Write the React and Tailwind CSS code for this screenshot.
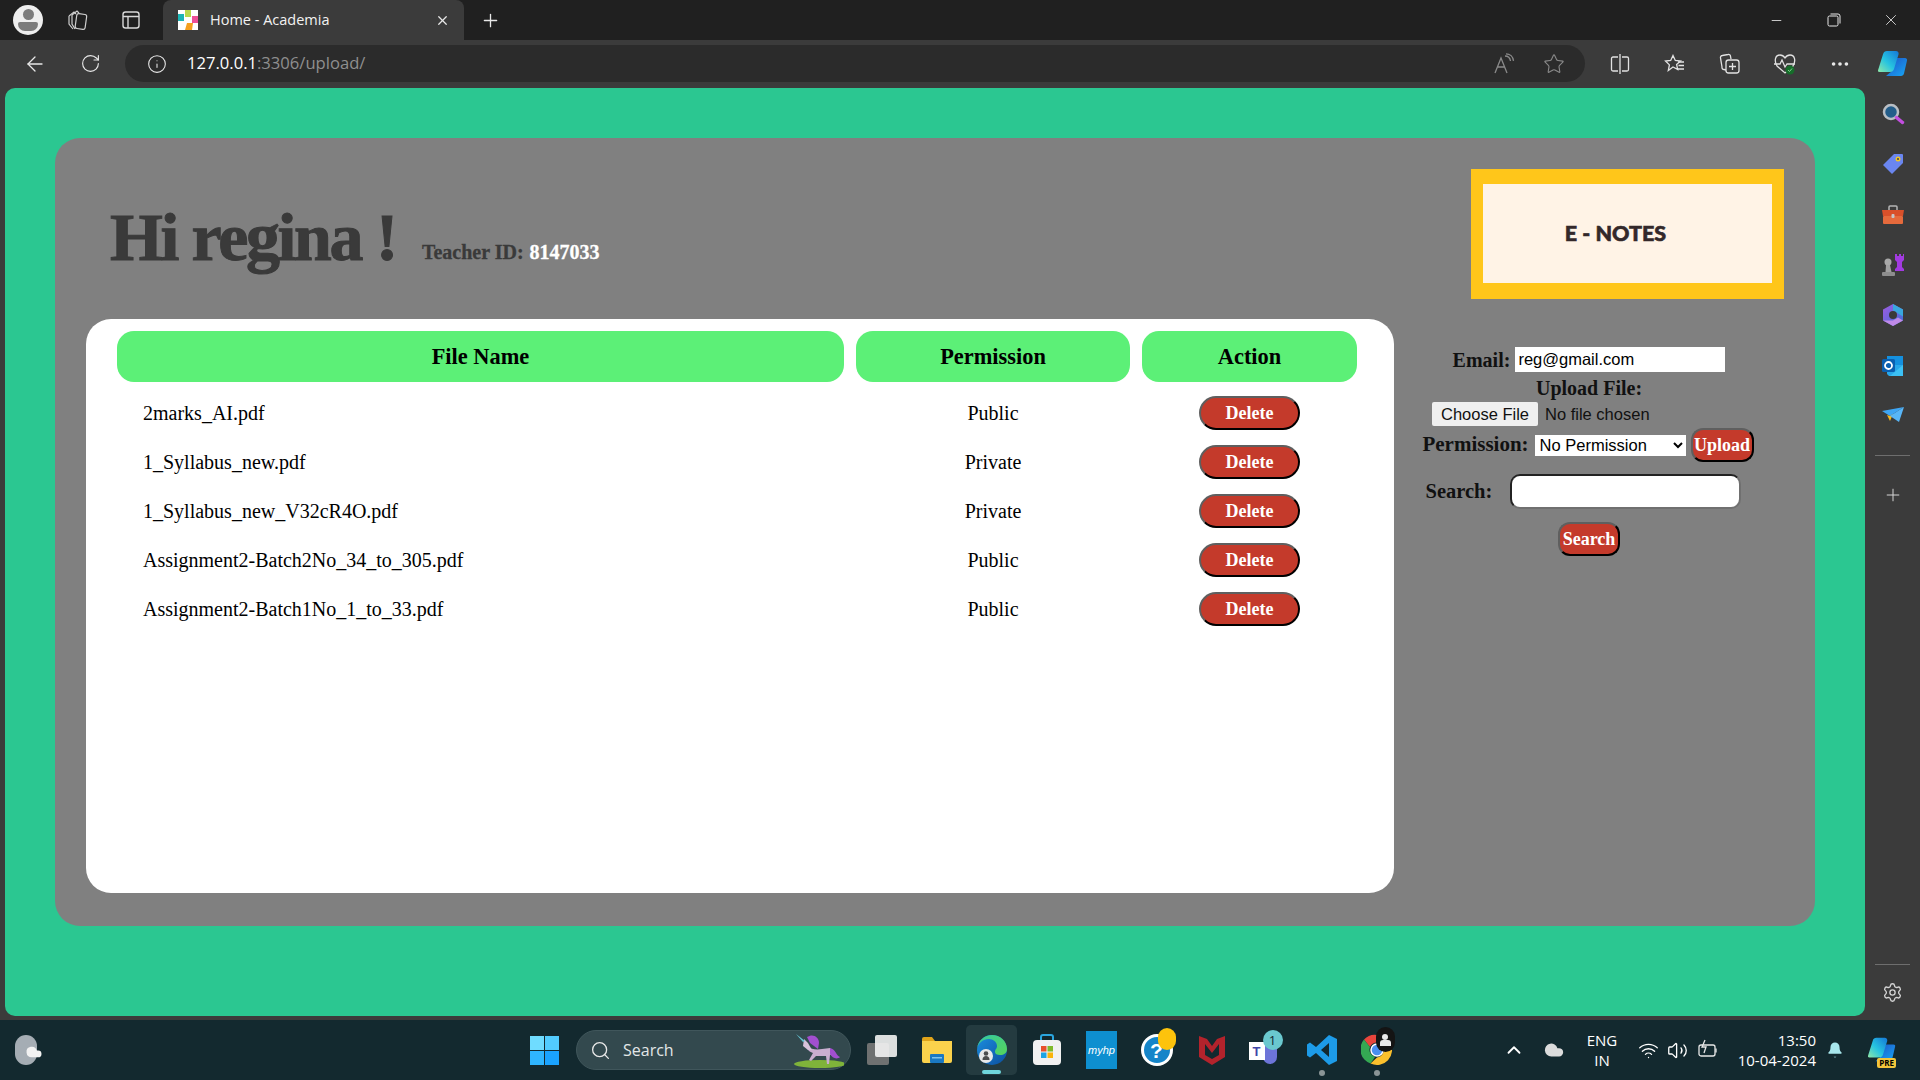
import { ArrowLeft, RotateCw, Info, Star, Plus, X, Minus, Search, MoreHorizontal, Settings, ChevronUp, Wifi, Volume2, Bell, Cloud } from "lucide-react";

const files = [
  { name: "2marks_AI.pdf", permission: "Public" },
  { name: "1_Syllabus_new.pdf", permission: "Private" },
  { name: "1_Syllabus_new_V32cR4O.pdf", permission: "Private" },
  { name: "Assignment2-Batch2No_34_to_305.pdf", permission: "Public" },
  { name: "Assignment2-Batch1No_1_to_33.pdf", permission: "Public" },
];

const serif = "font-['Liberation_Serif',serif]";
const ui = "font-['Open_Sans',sans-serif]";
const redBtn = "bg-[#c43a2b] text-white font-bold text-[18px] border-2 border-t-[#5f5f5f] border-l-[#5f5f5f] border-r-black border-b-black font-['Liberation_Serif',serif] leading-none";

/* ---------- browser icons ---------- */

function Favicon() {
  return (
    <svg width="20" height="20" viewBox="0 0 20 20">
      <rect width="20" height="20" fill="#fff" />
      <rect x="0" y="4" width="6" height="7" fill="#19b5b5" />
      <rect x="7" y="0" width="6" height="7" fill="#b6d94c" />
      <rect x="14" y="6" width="6" height="7" fill="#ec4f97" />
      <path d="M9 13h6l-1 7H7z" fill="#f59f1e" />
    </svg>
  );
}

function Profile() {
  return (
    <div className="w-[30px] h-[30px] rounded-full bg-[#eeeeee] overflow-hidden flex flex-col items-center justify-center">
      <div className="w-[11px] h-[11px] rounded-full bg-[#7b7b7b]" />
      <div className="w-[20px] h-[9px] mt-[2px] rounded-b-[10px] rounded-t-[3px] bg-[#7b7b7b]" />
    </div>
  );
}

function Workspaces() {
  return (
    <svg width="22" height="22" viewBox="0 0 22 22" fill="none" stroke="#cfcfcf" strokeWidth="1.2">
      <path d="M2 7l5-4 2 2M2 7v8l4 5" />
      <path d="M5 6l5-4 2 2M5 6v9l3 5" />
      <rect x="9" y="5" width="10" height="15" rx="2" transform="rotate(8 14 12)" />
    </svg>
  );
}

function VerticalTabs() {
  return (
    <svg width="20" height="20" viewBox="0 0 20 20" fill="none" stroke="#d8d8d8" strokeWidth="1.4">
      <rect x="2" y="2" width="16" height="16" rx="2.5" />
      <path d="M2 6.5h16M7 6.5V18" />
    </svg>
  );
}

function RestoreIcon() {
  return (
    <svg width="14" height="14" viewBox="0 0 14 14" fill="none" stroke="#e8e8e8" strokeWidth="1">
      <rect x="1" y="3" width="10" height="10" rx="1.5" />
      <path d="M3.5 1h7.5a2 2 0 0 1 2 2v7.5" />
    </svg>
  );
}

function ReadAloud() {
  return (
    <svg width="22" height="22" viewBox="0 0 22 22" fill="none" stroke="#8a8a8a" strokeWidth="1.3">
      <path d="M2 20L8 5l6 15M4.5 14h7" />
      <path d="M12 3c3 0 5 2 5.5 5M13 .8c4 0 7 3 7.5 7" />
    </svg>
  );
}

function SplitIcon() {
  return (
    <svg width="20" height="20" viewBox="0 0 20 20" fill="none" stroke="#e2e2e2" strokeWidth="1.3">
      <path d="M8 3H3a1.5 1.5 0 0 0-1.5 1.5v11A1.5 1.5 0 0 0 3 17h5M12 3h5a1.5 1.5 0 0 1 1.5 1.5v11A1.5 1.5 0 0 1 17 17h-5M10 0v20" />
    </svg>
  );
}

function FavoritesIcon() {
  return (
    <svg width="22" height="20" viewBox="0 0 22 20" fill="none" stroke="#e2e2e2" strokeWidth="1.3">
      <path d="M9 1.5l2.3 5 5.2.5-3.9 3.4 1.1 5.1L9 13l-4.700 3.500 1.100-5.600L1.500 7l5.200-.5z" />
      <path d="M14 8h6M14.500 11.500h5.500M13 15h7" />
    </svg>
  );
}

function CollectionsIcon() {
  return (
    <svg width="22" height="22" viewBox="0 0 22 22" fill="none" stroke="#e2e2e2" strokeWidth="1.3">
      <path d="M7 17l-2-.5a2 2 0 0 1-2-2.500L1.500 5a2 2 0 0 1 1.800-2.500L9 1.500a2 2 0 0 1 2.500 1.800L12 6" />
      <rect x="7" y="7" width="13" height="13" rx="2.500" />
      <path d="M13.500 10v7M10 13.500h7" />
    </svg>
  );
}

function HealthIcon() {
  return (
    <svg width="24" height="24" viewBox="0 0 24 24" fill="none">
      <path d="M4 14C1 9 2 3 7 3c2.500 0 4 1.500 5 3 1-1.500 2.500-3 5-3 5 0 6 6 3 11l-8 7z" stroke="#e2e2e2" strokeWidth="1.3" />
      <path d="M1 12h6l2-4 3 7 2-3h8" stroke="#e2e2e2" strokeWidth="1.3" fill="none" />
      <circle cx="17" cy="18" r="4.500" fill="#166d2a" />
      <path d="M15 18l1.500 1.500 2.500-3" stroke="#7fd08d" strokeWidth="1" />
    </svg>
  );
}

function Copilot({ size = 30 }) {
  return (
    <svg width={size} height={size} viewBox="0 0 30 30">
      <defs>
        <linearGradient id="cpA" x1="0" y1="1" x2="1" y2="0">
          <stop offset="0" stopColor="#8fe8a8" />
          <stop offset="0.45" stopColor="#27c4e0" />
          <stop offset="1" stopColor="#1477d8" />
        </linearGradient>
        <linearGradient id="cpB" x1="0" y1="0" x2="1" y2="1">
          <stop offset="0" stopColor="#1f4fc4" />
          <stop offset="1" stopColor="#17a8f5" />
        </linearGradient>
      </defs>
      <path d="M19 9h8a2 2 0 0 1 2 2.500l-3 13c-.400 1.500-1.500 2.500-3 2.500H8l3.500-3c1.500-1 2.500-2.500 3-4z" fill="url(#cpB)" />
      <path d="M9 2h9c2 0 3 1.500 2.500 3.500L16 20c-.600 2-2 3-4 3H1.500a1.500 1.500 0 0 1-1.400-2l5-16C5.700 3 7 2 9 2z" fill="url(#cpA)" />
    </svg>
  );
}

/* ---------- sidebar icons ---------- */

function SideSearch() {
  return (
    <svg width="24" height="24" viewBox="0 0 24 24" fill="none">
      <circle cx="10" cy="10" r="7" fill="#235d8a" stroke="#b9bec4" strokeWidth="2.500" />
      <path d="M15.500 15.500l6 5" stroke="#c34ee0" strokeWidth="3.500" strokeLinecap="round" />
    </svg>
  );
}

function SideTag() {
  return (
    <svg width="22" height="22" viewBox="0 0 22 22">
      <path d="M12 1h8a1 1 0 0 1 1 1v8L10 21 1 12z" fill="#6a86f0" />
      <circle cx="16" cy="6" r="2.500" fill="#f2c624" />
      <circle cx="16" cy="6" r="1" fill="#3a3a5a" />
    </svg>
  );
}

function SideToolbox() {
  return (
    <svg width="24" height="22" viewBox="0 0 24 22">
      <path d="M8 6V3a1 1 0 0 1 1-1h6a1 1 0 0 1 1 1v3" fill="none" stroke="#b5b5b5" strokeWidth="1.500" />
      <path d="M1 6h22l-1 6H2z" fill="#d9502a" />
      <rect x="2" y="12" width="20" height="8" rx="1" fill="#e56a3c" />
      <rect x="10.500" y="10" width="3" height="4" rx="1" fill="#c7c7c7" />
    </svg>
  );
}

function SideChess() {
  return (
    <svg width="24" height="24" viewBox="0 0 24 24">
      <path d="M14 1h2v2h2V1h2v2h2V1h1v6l-2 2v5l2 2v2h-9v-2l2-2V9l-2-2z" fill="#a23be0" />
      <circle cx="7" cy="9" r="3.500" fill="#a8a8a8" />
      <path d="M5 12h4l1.500 7h-6z" fill="#a0a0a0" />
      <rect x="1" y="19" width="13" height="4" rx="1" fill="#8d8d8d" />
    </svg>
  );
}

function SideM365() {
  return (
    <svg width="22" height="24" viewBox="0 0 22 24">
      <defs>
        <linearGradient id="msA" x1="0" y1="0" x2="1" y2="1">
          <stop offset="0" stopColor="#a05be0" />
          <stop offset="1" stopColor="#3d6fd8" />
        </linearGradient>
      </defs>
      <path d="M11 1l10 5.500v11L11 23 1 17.500v-11z" fill="url(#msA)" />
      <path d="M11 1l10 5.500v7l-5-3-5-3z" fill="#39a7de" />
      <path d="M1 17.500L11 23l10-5.500-5-3-5 3z" fill="#c08ae8" />
      <circle cx="11" cy="12" r="4" fill="#3a3a3a" />
    </svg>
  );
}

function SideOutlook() {
  return (
    <svg width="22" height="22" viewBox="0 0 22 22">
      <rect x="5" y="1" width="16" height="9" fill="#1490df" />
      <path d="M5 10h16v11H7l-2-2z" fill="#28a8ea" />
      <path d="M21 10v11H8z" fill="#50d9ff" opacity="0.5" />
      <rect x="0" y="4" width="13" height="13" rx="1.500" fill="#0a5fb0" />
      <circle cx="6.500" cy="10.500" r="3.500" fill="none" stroke="#fff" strokeWidth="1.800" />
    </svg>
  );
}

function SideSend() {
  return (
    <svg width="22" height="18" viewBox="0 0 22 18">
      <path d="M0 4L22 0 8 9z" fill="#3ea6f5" />
      <path d="M5 8l3 1 3-2-3 7z" fill="#f4b71e" />
      <path d="M22 0l-5 15-9-6z" fill="#58b6f8" />
    </svg>
  );
}

/* ---------- taskbar icons ---------- */

function Unicorn() {
  return (
    <svg width="54" height="36" viewBox="0 0 54 36">
      <ellipse cx="30" cy="31" rx="26" ry="4" fill="#7fb33a" />
      <path d="M18 14c3 2 8 3 14 2l8-1 2 6-2 1-1 9h-2l-1-8-10 0-5 5-2-1 4-7c-3-1-6-3-6-6z" fill="#c9aed0" />
      <path d="M14 6l4 4 4 7-4 0-5-4z" fill="#d8c2dc" />
      <path d="M6 1l9 7-2 1z" fill="#66c6d6" />
      <path d="M17 4c6-4 12 0 12 6l-1 6-8-6z" fill="#a24fd0" />
      <path d="M40 15c6 1 6 8 10 9-3 3-8 1-10-3z" fill="#a24fd0" />
    </svg>
  );
}

function TaskView() {
  return (
    <div className="w-[30px] h-[30px] flex flex-col">
      <div className="relative w-full h-full">
        <div className="absolute left-0 bottom-0 w-[22px] h-[22px] rounded-[2px] bg-[#6f7171]" />
        <div className="absolute right-0 top-0 w-[22px] h-[22px] rounded-[2px] bg-[#f3f3f3] opacity-90" />
      </div>
    </div>
  );
}

function FolderIcon() {
  return (
    <svg width="32" height="28" viewBox="0 0 32 28">
      <path d="M1 3a2 2 0 0 1 2-2h8l3 4h-13z" fill="#e0a41a" />
      <path d="M1 5h30v20a2 2 0 0 1-2 2H3a2 2 0 0 1-2-2z" fill="#fbd24c" />
      <rect x="9" y="18" width="14" height="9" rx="1" fill="#1a78c2" />
      <rect x="11" y="21" width="10" height="1.500" fill="#7cc2ee" />
    </svg>
  );
}

function EdgeIcon() {
  return (
    <svg width="32" height="32" viewBox="0 0 32 32">
      <defs>
        <linearGradient id="edA" x1="0" y1="0" x2="1" y2="1">
          <stop offset="0" stopColor="#36c9a0" />
          <stop offset="1" stopColor="#56d45a" />
        </linearGradient>
        <linearGradient id="edB" x1="0" y1="0" x2="1" y2="1">
          <stop offset="0" stopColor="#1c8fe0" />
          <stop offset="1" stopColor="#0c4f9e" />
        </linearGradient>
      </defs>
      <circle cx="16" cy="16" r="15" fill="url(#edB)" />
      <path d="M1 15C2 6 9 1 16 1c8 0 15 6 15 14 0 4-3 6-7 6-3 0-5-1-5-3 0-3 2-3 2-6 0-4-4-7-8-7-6 0-11 4-12 10z" fill="url(#edA)" />
      <circle cx="10" cy="22" r="7" fill="#e9e9e9" />
      <circle cx="10" cy="19.500" r="2.300" fill="#4d4d4d" />
      <path d="M6.500 26c0-3 1.500-4 3.500-4s3.500 1 3.500 4z" fill="#4d4d4d" />
    </svg>
  );
}

function StoreIcon() {
  return (
    <svg width="30" height="32" viewBox="0 0 30 32">
      <path d="M9 7V3a2 2 0 0 1 2-2h8a2 2 0 0 1 2 2v4" fill="none" stroke="#2aa6e0" strokeWidth="2" />
      <rect x="1" y="6" width="28" height="25" rx="4" fill="#f1f1f1" />
      <rect x="9" y="12" width="5.500" height="5.500" fill="#e8502a" />
      <rect x="15.500" y="12" width="5.500" height="5.500" fill="#7fba2c" />
      <rect x="9" y="18.500" width="5.500" height="5.500" fill="#1ea4e4" />
      <rect x="15.500" y="18.500" width="5.500" height="5.500" fill="#fab40a" />
    </svg>
  );
}

function HelpIcon() {
  return (
    <div className="relative w-[32px] h-[32px] rounded-full border-[3px] border-white bg-[#1585c9] flex items-center justify-center">
      <span className="text-white font-bold text-[21px] leading-none font-['Liberation_Sans',sans-serif]">?</span>
      <div className="absolute -right-[6px] -top-[9px] w-[18px] h-[22px] rounded-full bg-[#fdc30c]" />
    </div>
  );
}

function McafeeIcon() {
  return (
    <svg width="28" height="32" viewBox="0 0 28 32">
      <path d="M1 2l8 3 5 7 5-7 8-3v21l-13 8-13-8z" fill="#b3232c" />
      <path d="M7 10l7 9 7-9v11l-7 4-7-4z" fill="#13292f" />
    </svg>
  );
}

function TeamsIcon() {
  return (
    <div className="relative w-[36px] h-[32px]">
      <div className="absolute left-[14px] top-[10px] w-[14px] h-[20px] rounded-b-[7px] bg-[#6d74d8]" />
      <div className="absolute left-0 top-[8px] w-[16px] h-[18px] bg-white flex items-center justify-center text-[#3f46a8] text-[13px] font-bold leading-none font-['Liberation_Sans',sans-serif]">T</div>
      <div className="absolute left-[14px] -top-[4px] w-[20px] h-[20px] rounded-full bg-[#6ac8cf] flex items-center justify-center text-[#13292f] text-[13px] leading-none font-['Open_Sans',sans-serif]">1</div>
    </div>
  );
}

function VsCodeIcon() {
  return (
    <svg width="32" height="32" viewBox="0 0 32 32">
      <path d="M23 1l8 4v22l-8 4-13-12-6 4.500-3-2v-11l3-2 6 4.500zM23 9l-8 7 8 7z" fill="#1d9be8" fillRule="evenodd" />
    </svg>
  );
}

function ChromeIcon() {
  return (
    <div className="relative w-[32px] h-[32px]">
      <svg width="32" height="32" viewBox="0 0 32 32">
        <path d="M16 1a15 15 0 0 1 13 7.500H16a7.500 7.500 0 0 0-7 4.500L3 5.500A15 15 0 0 1 16 1z" fill="#e8453c" />
        <path d="M3 5.500L9 13a7.500 7.500 0 0 0 5 10l-4.500 6.500A15 15 0 0 1 3 5.500z" fill="#34a853" />
        <path d="M29 8.500A15 15 0 0 1 9.500 29.500L16 23.500a7.500 7.500 0 0 0 6-11l-6-4z" fill="#fbc02d" />
        <circle cx="16" cy="16" r="6" fill="#4a8ff0" stroke="#fff" strokeWidth="1.500" />
      </svg>
      <div className="absolute -right-[2px] -top-[7px] w-[19px] h-[25px] rounded-full bg-[#141414] flex flex-col items-center justify-center">
        <div className="w-[6px] h-[6px] rounded-full bg-[#e9e9e9]" />
        <div className="w-[11px] h-[6px] rounded-t-[3px] bg-[#e9e9e9]" />
      </div>
    </div>
  );
}

function BatteryIcon() {
  return (
    <svg width="22" height="22" viewBox="0 0 22 22" fill="none" stroke="#e8e8e8" strokeWidth="1.300">
      <rect x="2" y="6" width="16" height="11" rx="2" />
      <path d="M19 9.500v4" />
      <path d="M8 1L5 8h4l-2 6" />
    </svg>
  );
}

function Slot({ children, className = "" }) {
  return <div className={`w-[55px] h-full shrink-0 flex items-center justify-center ${className}`}>{children}</div>;
}

function Side({ children }) {
  return <div className="h-[50.3px] flex items-center justify-center">{children}</div>;
}

export default function App() {
  return (
    <div className={`w-[1920px] h-[1080px] flex flex-col overflow-hidden bg-[#3b3b3b] ${serif}`}>

      {/* TAB STRIP */}
      <div className="h-10 bg-[#202020] flex items-center text-white shrink-0">
        <div className="w-[66px] pl-[13px]"><Profile /></div>
        <div className="w-[55px] pl-[1px]"><Workspaces /></div>
        <div className="w-[42px]"><VerticalTabs /></div>
        <div className="w-[301px] h-10 bg-[#3b3b3b] rounded-t-[8px] flex items-center pl-[15px] pr-[14px]">
          <Favicon />
          <span className={`ml-3 text-[14.5px] text-[#f2f2f2] ${ui}`}>Home - Academia</span>
          <X size={15} className="ml-auto text-[#e8e8e8]" />
        </div>
        <Plus size={21} strokeWidth={1.5} className="ml-4 text-[#e8e8e8]" />
        <div className="ml-auto flex items-center">
          <div className="w-[57px] flex justify-center"><Minus size={15} strokeWidth={1.2} /></div>
          <div className="w-[57px] flex justify-center"><RestoreIcon /></div>
          <div className="w-[58px] flex justify-center"><X size={18} strokeWidth={1} /></div>
        </div>
      </div>

      {/* ADDRESS BAR */}
      <div className="h-12 bg-[#3b3b3b] flex items-center text-[#e8e8e8] shrink-0 pb-px">
        <div className="w-[69px] flex justify-center"><ArrowLeft size={24} strokeWidth={1.3} /></div>
        <div className="w-[42px] flex justify-center"><RotateCw size={21} strokeWidth={1.3} /></div>
        <div className="ml-[14px] w-[1460px] h-[37px] rounded-full bg-[#2b2b2b] flex items-center pl-[22px]">
          <Info size={20} strokeWidth={1.3} className="text-[#e8e8e8]" />
          <span className={`ml-[20px] text-[16.6px] text-[#8f8f8f] ${ui}`}><span className="text-white">127.0.0.1</span>:3306/upload/</span>
          <div className="ml-auto flex items-center gap-[28px] pr-[20px]">
            <ReadAloud />
            <Star size={22} strokeWidth={1.2} className="text-[#8a8a8a]" />
          </div>
        </div>
        <div className="ml-[25px] flex items-center">
          <div className="w-[20px] flex justify-center"><SplitIcon /></div>
          <div className="w-[22px] ml-[34px] flex justify-center"><FavoritesIcon /></div>
          <div className="w-[22px] ml-[33px] flex justify-center"><CollectionsIcon /></div>
          <div className="w-[24px] ml-[32px] flex justify-center"><HealthIcon /></div>
          <div className="w-[24px] ml-[31px] flex justify-center"><MoreHorizontal size={22} strokeWidth={2} /></div>
          <div className="ml-[26px]"><Copilot /></div>
        </div>
      </div>

      {/* MIDDLE */}
      <div className="flex-1 min-h-0 flex">

        <div className="ml-[5px] w-[1860px] h-[928px] bg-[#2bc791] rounded-[10px] pl-[50px] pt-[50px]">

          <div className="w-[1760px] h-[788px] bg-[#808080] rounded-[25px] pl-[31px] pr-[31px] flex flex-col">

            {/* HEADER */}
            <div className="h-[181px] shrink-0 flex justify-between">
              <div className="pl-[24px] pt-[61px] flex items-baseline h-fit">
                <h1 className="text-[68px] font-bold leading-[76px] tracking-[-2.4px] text-[#3a3a3a] [-webkit-text-stroke:1px_#3a3a3a]">Hi regina !</h1>
                <p className="ml-[26px] -translate-y-px text-[20px] font-bold text-[#3a3a3a] [-webkit-text-stroke:0.3px_#3a3a3a]">Teacher ID: <span className="text-white ml-px [-webkit-text-stroke:0.3px_#ffffff]">8147033</span></p>
              </div>
              <div className="mt-[31px] w-[313px] h-[130px] bg-[#ffc61a] px-[12px] pt-[15px] pb-[16px]">
                <div className="w-full h-full bg-[#fff3e6] flex items-center justify-center pr-[24px]">
                  <span className="text-[21.5px] font-black text-[#33282a] font-['Lato',sans-serif] [-webkit-text-stroke:0.6px_#33282a]">E - NOTES</span>
                </div>
              </div>
            </div>

            {/* BODY */}
            <div className="flex">

              <div className="w-[1308px] h-[574px] bg-white rounded-[25px] pl-[31px] pt-[12px] text-black">
                <div className="grid grid-cols-[727px_274px_215px] gap-x-3">
                  <div className="h-[51px] rounded-[17px] bg-[#5cf077] flex items-center justify-center font-bold text-[22.4px]">File Name</div>
                  <div className="h-[51px] rounded-[17px] bg-[#5cf077] flex items-center justify-center font-bold text-[22.4px]">Permission</div>
                  <div className="h-[51px] rounded-[17px] bg-[#5cf077] flex items-center justify-center font-bold text-[22.4px]">Action</div>
                </div>
                <div className="mt-[6px]">
                  {files.map((f) => (
                    <div key={f.name} className="grid grid-cols-[727px_274px_215px] gap-x-3 h-[49px] items-center text-[20px]">
                      <div className="pl-[26px]">{f.name}</div>
                      <div className="text-center">{f.permission}</div>
                      <div className="flex justify-center">
                        <button className={`w-[101px] h-[34px] rounded-full ${redBtn}`}>Delete</button>
                      </div>
                    </div>
                  ))}
                </div>
              </div>

              {/* UPLOAD FORM */}
              <div className="w-[390px] flex flex-col items-center text-[#111111] text-[20px] font-bold">
                <div className="mt-[28px] flex items-center gap-[5px] h-[25px]">
                  <label>Email:</label>
                  <input
                    defaultValue="reg@gmail.com"
                    className="w-[210px] h-[25px] bg-white px-[3px] text-[16.5px] font-normal text-black font-['Liberation_Sans',sans-serif] outline-none"
                  />
                </div>
                <div className="h-[30px] pt-[2px] flex items-center">Upload File:</div>
                <div className="w-[314px] h-[24px] flex items-center font-['Liberation_Sans',sans-serif] font-normal text-[16.5px]">
                  <button className="w-[106px] h-[24px] bg-[#efefef] rounded-[2px] text-[#111111]">Choose File</button>
                  <span className="ml-[7px]">No file chosen</span>
                </div>
                <div className="mt-[2px] mr-[2px] flex items-center h-[34px]">
                  <label className="text-[21px]">Permission:</label>
                  <select className="ml-[6px] w-[151px] h-[21px] bg-white text-[16.5px] font-normal text-black font-['Liberation_Sans',sans-serif] outline-none pl-[1px]">
                    <option>No Permission</option>
                    <option>Public</option>
                    <option>Private</option>
                  </select>
                  <button className={`ml-[5px] w-[63px] h-[34px] rounded-[12px] ${redBtn}`}>Upload</button>
                </div>
                <div className="mt-[12px] mr-[12px] flex items-center h-[35px]">
                  <label className="w-[84px] text-[20.5px]">Search:</label>
                  <input className="w-[231px] h-[35px] bg-white rounded-[10px] border-2 border-t-[#222222] border-l-[#222222] border-r-[#707070] border-b-[#707070] outline-none" />
                </div>
                <button className={`mt-[13px] w-[62px] h-[34px] rounded-[12px] ${redBtn}`}>Search</button>
              </div>

            </div>
          </div>
        </div>

        {/* EDGE SIDEBAR */}
        <div className="w-[55px] flex flex-col pt-px text-[#d5d5d5]">
          <Side><SideSearch /></Side>
          <Side><SideTag /></Side>
          <Side><SideToolbox /></Side>
          <Side><SideChess /></Side>
          <Side><SideM365 /></Side>
          <Side><SideOutlook /></Side>
          <Side><SideSend /></Side>
          <div className="mt-[14px] mx-[10px] h-px bg-[#6e6e6e]" />
          <div className="mt-[29px] flex justify-center"><Plus size={20} strokeWidth={1.2} /></div>
          <div className="mt-auto mx-[10px] h-px bg-[#6e6e6e]" />
          <div className="mt-[17px] mb-[13px] flex justify-center"><Settings size={21} strokeWidth={1.5} /></div>
        </div>
      </div>

      {/* TASKBAR */}
      <div className={`h-[60px] shrink-0 mt-[4px] bg-[#13292f] flex items-center text-white ${ui}`}>
        <div className="w-[530px] shrink-0 pl-[15px]">
          <div className="relative w-[28px] h-[30px]">
            <div className="w-[22px] h-[30px] rounded-full bg-[#a5adb4]" />
            <Cloud size={18} fill="#f2f2f2" strokeWidth={0} className="absolute right-0 bottom-[4px]" />
          </div>
        </div>
        <div className="w-[29px] h-[29px] shrink-0 grid grid-cols-2 gap-[1px]">
          <div className="bg-[#6fdcff]" />
          <div className="bg-[#52ccff]" />
          <div className="bg-[#2fb5ff]" />
          <div className="bg-[#1aa3ff]" />
        </div>
        <div className="ml-[17px] w-[275px] shrink-0 h-[40px] rounded-full bg-[#33494e] border border-[#40565b] flex items-center pl-[13px]">
          <Search size={21} strokeWidth={1.5} className="text-[#e8e8e8]" />
          <span className="ml-[12px] text-[16px] text-[#e2e6e7]">Search</span>
          <div className="ml-auto mr-[6px] mt-[2px]"><Unicorn /></div>
        </div>
        <div className="ml-[16px] shrink-0"><TaskView /></div>
        <div className="ml-[12px] flex h-[60px] items-center">
          <Slot><FolderIcon /></Slot>
          <Slot>
            <div className="relative w-[51px] h-[50px] rounded-[5px] bg-[#243b40] flex items-center justify-center">
              <EdgeIcon />
              <div className="absolute bottom-[1px] left-[16px] w-[19px] h-[4px] rounded-full bg-[#6fd6dc]" />
            </div>
          </Slot>
          <Slot><StoreIcon /></Slot>
          <Slot>
            <div className="w-[31px] h-[38px] bg-[#0e8fd0] flex items-center justify-center text-[11px] italic text-white leading-none font-['Liberation_Sans',sans-serif]">myhp</div>
          </Slot>
          <Slot><HelpIcon /></Slot>
          <Slot><McafeeIcon /></Slot>
          <Slot><TeamsIcon /></Slot>
          <Slot>
            <div className="relative">
              <VsCodeIcon />
              <div className="absolute -bottom-[10px] left-[13px] w-[6px] h-[6px] rounded-full bg-[#8a9496]" />
            </div>
          </Slot>
          <Slot>
            <div className="relative">
              <ChromeIcon />
              <div className="absolute -bottom-[10px] left-[13px] w-[6px] h-[6px] rounded-full bg-[#8a9496]" />
            </div>
          </Slot>
        </div>
        <div className="ml-[99px]"><ChevronUp size={22} strokeWidth={2} /></div>
        <div className="ml-[18px]"><Cloud size={22} fill="#dcdcdc" strokeWidth={0} /></div>
        <div className="ml-[22px] w-[30px] flex flex-col items-center text-[15px] leading-[20px]"><span>ENG</span><span>IN</span></div>
        <div className="ml-[21px]"><Wifi size={21} strokeWidth={1.5} /></div>
        <div className="ml-[8px]"><Volume2 size={21} strokeWidth={1.5} /></div>
        <div className="ml-[9px]"><BatteryIcon /></div>
        <div className="ml-[9px] w-[88px] text-right text-[15px] leading-[20px] whitespace-nowrap">13:50<br />10-04-2024</div>
        <div className="ml-[10px]"><Bell size={18} fill="#a8e6ec" strokeWidth={0} /></div>
        <div className="ml-[24px] relative">
          <Copilot size={28} />
          <div className="absolute -bottom-[4px] right-0 px-[2px] rounded-[2px] bg-[#f3c53c] text-[8px] font-bold text-black leading-[10px]">PRE</div>
        </div>
      </div>

    </div>
  );
}
